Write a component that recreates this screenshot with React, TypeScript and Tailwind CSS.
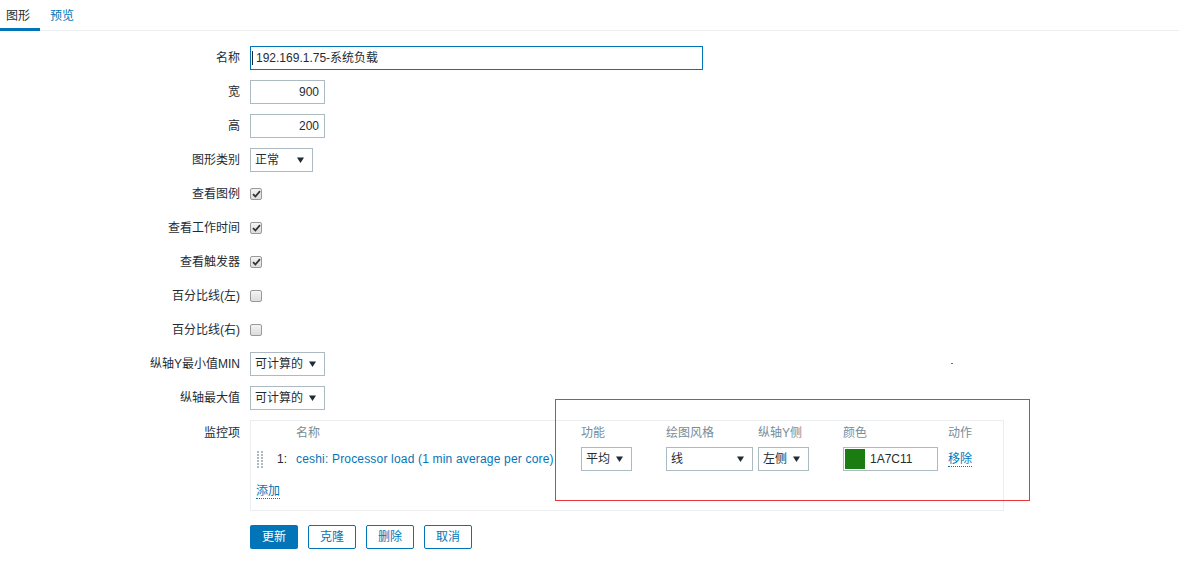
import React from "react";

const font = { fontFamily: '"Liberation Sans", Arial, "Noto Sans CJK SC", sans-serif' };

function Arrow() {
  return (
    <svg width="7" height="6" viewBox="0 0 7 6" className="shrink-0">
      <path d="M0 0.5 H7 L3.5 6 Z" fill="#1f2c33" />
    </svg>
  );
}

function Select({ w, text }: { w: string; text: string }) {
  return (
    <div className={`${w} h-[24px] border border-[#acbbc2] bg-white flex items-center justify-between pl-[4px] pr-[8px] text-[12px] text-[#1f2c33]`}>
      <span>{text}</span>
      <Arrow />
    </div>
  );
}

function Check({ on }: { on: boolean }) {
  return (
    <div className="w-[12px] h-[12px] rounded-[2px] border border-[#9a9a9a] bg-gradient-to-b from-[#f4f4f4] to-[#dcdcdc] flex items-center justify-center">
      {on && (
        <svg width="9" height="8" viewBox="0 0 9 8">
          <path d="M1 4.2 L3.4 6.5 L8 1.2" stroke="#333" strokeWidth="1.8" fill="none" />
        </svg>
      )}
    </div>
  );
}

function Label({ children, top }: { children: React.ReactNode; top?: boolean }) {
  return (
    <div className={`text-right text-[12px] text-[#1f2c33] ${top ? "pt-[5px] self-start leading-[16px]" : "h-[24px] flex items-center justify-end"}`}>
      {children}
    </div>
  );
}

function Handle() {
  return (
    <div className="grid grid-cols-2 gap-x-[2px] gap-y-[1px] w-[6px]">
      {Array.from({ length: 12 }).map((_, i) => (
        <div key={i} className="w-[2px] h-[2px] bg-[#acbbc2]" />
      ))}
    </div>
  );
}

export default function App() {
  return (
    <div className="relative w-[1179px] h-[561px] bg-white overflow-hidden" style={font}>
      <div className="flex h-[31px] border-b border-[#ebeef0] text-[12px]">
        <div className="w-[40px] pl-[6px] pt-[7px] border-b-[3px] border-[#0275b8] text-[#1f2c33] h-[31px]">图形</div>
        <div className="pl-[10px] pt-[7px] text-[#0275b8]">预览</div>
      </div>

      <div className="mt-[15px] grid grid-cols-[240px_1fr] gap-x-[10px] gap-y-[10px]">
        <Label>名称</Label>
        <div className="w-[453px] h-[24px] border border-[#0275b8] flex items-center pl-[1px] text-[12px] text-[#1f2c33]">
          <span className="w-[1px] h-[14px] bg-[#1f2c33] mr-[3px]" />
          192.169.1.75-系统负载
        </div>

        <Label>宽</Label>
        <div className="w-[75px] h-[24px] border border-[#acbbc2] flex items-center justify-end pr-[5px] text-[12px] text-[#1f2c33]">900</div>

        <Label>高</Label>
        <div className="w-[75px] h-[24px] border border-[#acbbc2] flex items-center justify-end pr-[5px] text-[12px] text-[#1f2c33]">200</div>

        <Label>图形类别</Label>
        <div><Select w="w-[63px]" text="正常" /></div>

        <Label>查看图例</Label>
        <div className="h-[24px] flex items-center"><Check on /></div>

        <Label>查看工作时间</Label>
        <div className="h-[24px] flex items-center"><Check on /></div>

        <Label>查看触发器</Label>
        <div className="h-[24px] flex items-center"><Check on /></div>

        <Label>百分比线(左)</Label>
        <div className="h-[24px] flex items-center"><Check on={false} /></div>

        <Label>百分比线(右)</Label>
        <div className="h-[24px] flex items-center"><Check on={false} /></div>

        <Label>纵轴Y最小值MIN</Label>
        <div><Select w="w-[75px]" text="可计算的" /></div>

        <Label>纵轴最大值</Label>
        <div><Select w="w-[75px]" text="可计算的" /></div>

        <Label top>监控项</Label>
        <div className="w-[754px] h-[91px] border border-[#ebeef0] pt-[4px] pl-[5px] text-[12px] leading-[16px]">
          <div className="h-[16px] grid grid-cols-[21px_19px_285px_85px_92px_85px_105px_1fr] items-center">
            <div />
            <div />
            <div className="text-[#768d99]">名称</div>
            <div className="text-[#768d99]">功能</div>
            <div className="text-[#768d99]">绘图风格</div>
            <div className="text-[#768d99]">纵轴Y侧</div>
            <div className="text-[#768d99]">颜色</div>
            <div className="text-[#768d99]">动作</div>
          </div>
          <div className="mt-[6px] h-[24px] grid grid-cols-[21px_19px_285px_85px_92px_85px_105px_1fr] items-center">
            <div className="pl-[1px]"><Handle /></div>
            <div className="text-[#1f2c33]">1:</div>
            <div className="text-[#0275b8] whitespace-nowrap tracking-[0.18px]">ceshi: Processor load (1 min average per core)</div>
            <div><Select w="w-[51px]" text="平均" /></div>
            <div><Select w="w-[87px]" text="线" /></div>
            <div><Select w="w-[51px]" text="左侧" /></div>
            <div className="w-[95px] h-[24px] border border-[#acbbc2] flex items-center pl-[1px]">
              <div className="w-[20px] h-[20px] bg-[#1a7c11]" />
              <span className="ml-[5px] text-[#1f2c33]">1A7C11</span>
            </div>
            <div>
              <span className="text-[#0275b8] border-b border-dotted border-[#0275b8]">移除</span>
            </div>
          </div>
          <div className="mt-[12px] h-[16px] flex items-center">
            <span className="text-[#0275b8] border-b border-dotted border-[#0275b8] leading-[14px]">添加</span>
          </div>
        </div>

        <div />
        <div className="mt-[4px] flex gap-[10px] text-[12px]">
          <div className="w-[48px] h-[24px] rounded-[2px] bg-[#0275b8] text-white flex items-center justify-center">更新</div>
          <div className="w-[48px] h-[24px] rounded-[2px] border border-[#0275b8] text-[#0275b8] flex items-center justify-center">克隆</div>
          <div className="w-[48px] h-[24px] rounded-[2px] border border-[#0275b8] text-[#0275b8] flex items-center justify-center">删除</div>
          <div className="w-[48px] h-[24px] rounded-[2px] border border-[#0275b8] text-[#0275b8] flex items-center justify-center">取消</div>
        </div>
      </div>

      <div className="absolute left-[555px] top-[399px] w-[475px] h-[102px] border border-[#e8373b] pointer-events-none" />
      <div className="absolute left-[951px] top-[363px] w-[2px] h-[1px] bg-[#e8373b]" />
    </div>
  );
}
